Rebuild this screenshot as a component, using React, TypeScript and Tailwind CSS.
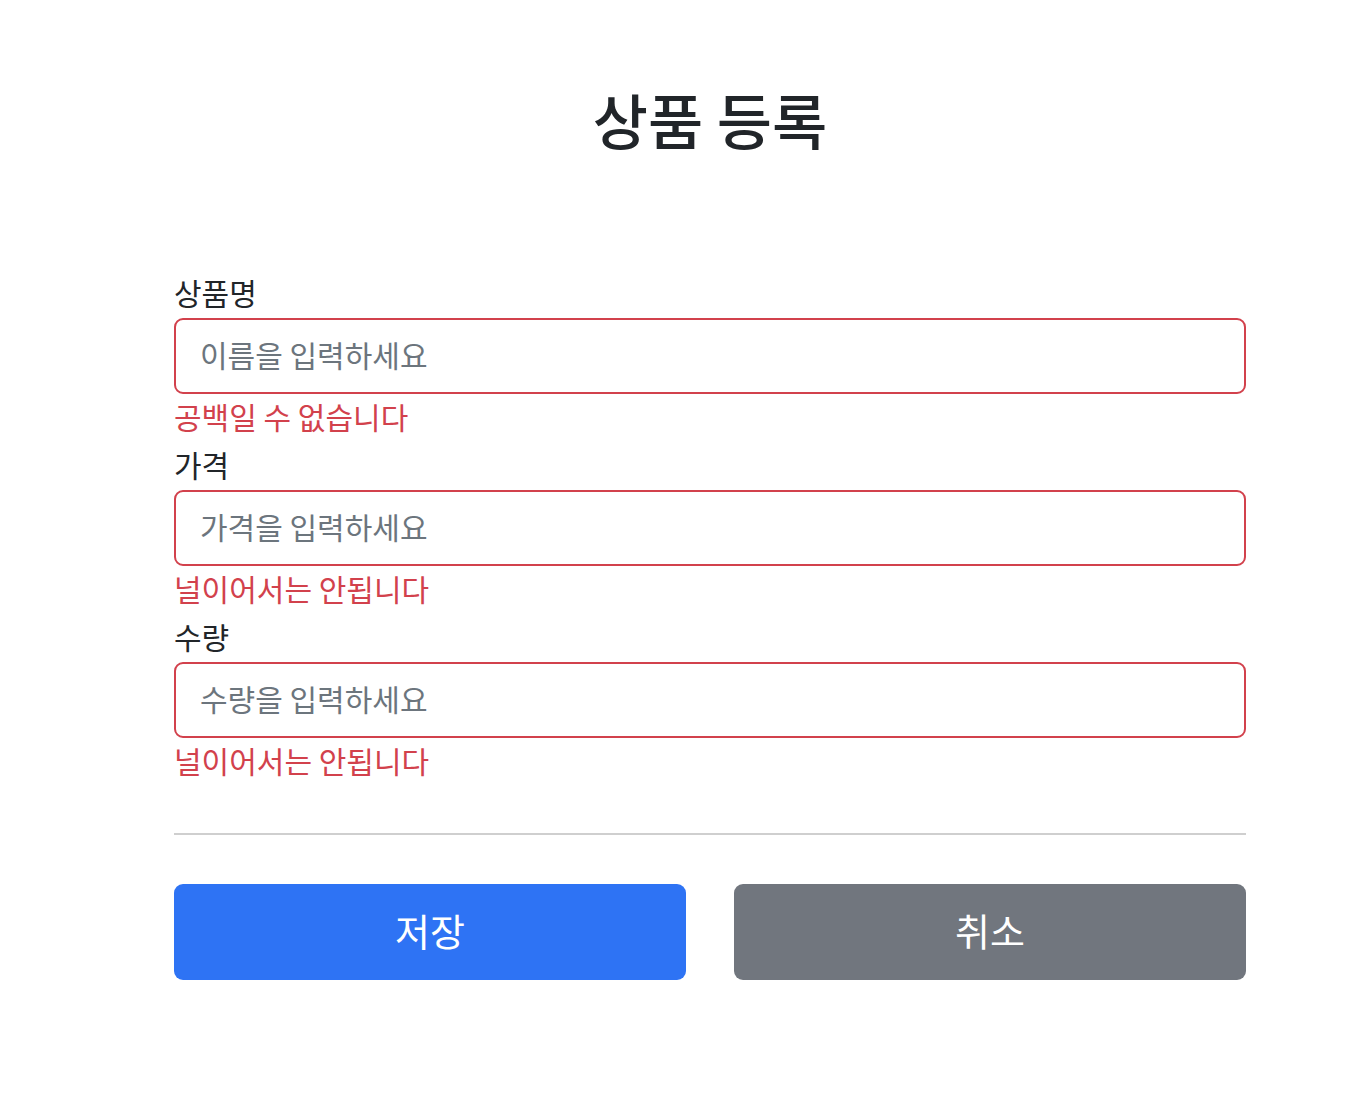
const fields = [
    { label: "상품명", placeholder: "이름을 입력하세요", error: "공백일 수 없습니다" },
    { label: "가격", placeholder: "가격을 입력하세요", error: "널이어서는 안됩니다" },
    { label: "수량", placeholder: "수량을 입력하세요", error: "널이어서는 안됩니다" },
];

const App = () => {
    return (
        <div className="min-h-screen bg-white text-[#212529] font-['Noto_Sans_CJK_KR','Noto_Sans',sans-serif]">
            <div className="ml-[174px] w-[1072px] pt-[83px]">
                <h2 className="text-center text-[60px] leading-[72px] font-medium">상품 등록</h2>
                <form className="mt-[121px] flex flex-col gap-[12px]" onSubmit={(e) => e.preventDefault()}>
                    {fields.map((f) => (
                        <div key={f.label} className="flex flex-col">
                            <label className="h-[36px] text-[30px] leading-[32px]">{f.label}</label>
                            <input
                                type="text"
                                placeholder={f.placeholder}
                                className="mt-[6px] h-[76px] w-full rounded-[9px] border-2 border-[#d2414c] px-[24px] pb-[4px] text-[30px] outline-none placeholder:text-[#6c757d]"
                            />
                            <div className="mt-[6px] h-[36px] text-[30px] leading-[32px] text-[#d2414c]">{f.error}</div>
                        </div>
                    ))}
                </form>
                <hr className="mt-[53px] border-t-2 border-[#cfcfcf]" />
                <div className="mt-[49px] grid grid-cols-2 gap-[48px]">
                    <button className="h-[96px] rounded-[9px] bg-[#2e73f4] pb-[6px] text-[38px] text-white">저장</button>
                    <button className="h-[96px] rounded-[9px] bg-[#71767e] pb-[6px] text-[38px] text-white">취소</button>
                </div>
            </div>
        </div>
    );
};

export default App;
